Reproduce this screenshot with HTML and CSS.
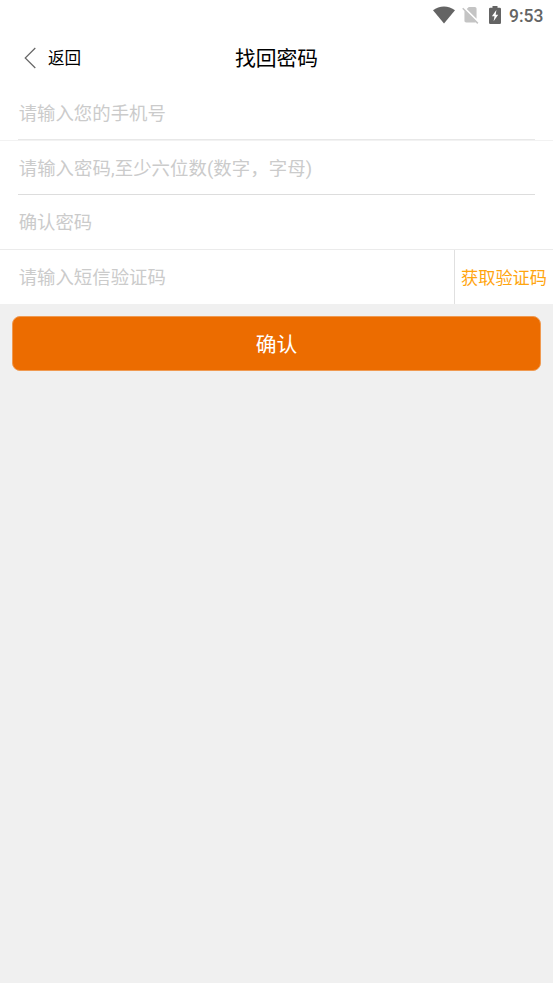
FILE: index.html
```html
<!DOCTYPE html>
<html lang="zh-CN">
<head>
<meta charset="utf-8">
<title>找回密码</title>
<link rel="stylesheet" href="styles.css">
</head>
<body>
<div class="status">
  <svg class="wifi" width="22" height="18" viewBox="0 0 22 18"><path d="M0 4.3C6.2-.9 15.8-.9 22 4.3L11 17.4Z"/></svg>
  <svg class="sim" width="17" height="18" viewBox="2.2 1.9 19.6 20.8"><path d="M19 5c0-1.1-.9-2-2-2h-7L7.66 5.34 19 16.68ZM3.65 3.88 2.38 5.15 5 7.77V19c0 1.1.9 2 2 2h10c.35 0 .67-.1.96-.26l1.88 1.88 1.27-1.27Z"/></svg>
  <svg class="battery" width="12" height="18" viewBox="0 0 12 18"><path fill-rule="evenodd" d="M3.5 0H8.5V1.8H10.7Q12 1.8 12 3.1V16.7Q12 18 10.7 18H1.3Q0 18 0 16.7V3.1Q0 1.8 1.3 1.8H3.5ZM7.4 4 2.9 10.2H5.5L4.6 15.2 9.2 8.8H6.7Z"/></svg>
  <span class="time">9:53</span>
</div>
<header class="nav">
  <a class="back"><svg width="12" height="22" viewBox="0 0 12 22"><path d="M11.3 1 1.2 11 11.3 21"/></svg><span>返回</span></a>
  <h1>找回密码</h1>
</header>
<main>
  <div class="form">
    <div class="row phone"><div class="field">请输入您的手机号</div></div>
    <div class="row password"><div class="field">请输入密码,至少六位数(数字，字母)</div></div>
    <div class="row confirm"><div class="field plain">确认密码</div></div>
    <div class="row code"><div class="field plain">请输入短信验证码</div><a class="get-code">获取验证码</a></div>
  </div>
  <div class="submit">确认</div>
</main>
</body>
</html>
```
FILE: styles.css
```css
* { box-sizing: border-box; }
body {
  margin: 0;
  min-height: 983px;
  background: #f0f0f0;
  font-family: Roboto, "Noto Sans CJK SC", sans-serif;
}
svg { display: block; flex: none; }
.status {
  display: flex;
  height: 31px;
  padding: 6px 10px 0 433px;
  background: #fff;
  color: #646464;
}
.wifi, .battery { fill: #646464; }
.sim { margin-left: 7px; fill: #c4c4c4; }
.battery { margin-left: 10px; }
.time {
  margin-left: 8px;
  font-size: 17.5px;
  font-weight: 500;
  line-height: 20px;
  white-space: nowrap;
}
.nav {
  display: grid;
  grid-template-columns: 1fr auto 1fr;
  align-items: center;
  height: 54px;
  background: #fff;
  color: #000;
}
.back {
  display: flex;
  align-items: center;
  gap: 12px;
  padding-left: 24px;
  font-size: 16.6px;
}
.back span { padding-bottom: 2px; }
.back path { fill: none; stroke: #666; stroke-width: 1.2; }
h1 { margin: 0; padding-top: 2px; font-size: 20.8px; font-weight: 400; line-height: 52px; }
.form { background: #fff; color: #cbcbcb; font-size: 18.4px; }
.row { display: flex; height: 55px; }
.field {
  flex: 1;
  margin: 0 18px;
  padding-left: 0.7px;
  border-bottom: 1px solid #ddd;
  line-height: 56px;
}
.plain { border-bottom: 0; }
.phone { height: 56px; border-bottom: 1px solid #f2f2f2; }
.phone .field { border-color: #e8e8e8; line-height: 58px; }
.password { height: 54px; }
.password .field { letter-spacing: 0.07px; }
.confirm { border-bottom: 1px solid #ebebeb; }
.code { height: 54px; }
.get-code {
  width: 99px;
  padding-left: 6px;
  border-left: 1px solid #e0e0e0;
  color: #ffa50f;
  font-size: 17.2px;
  line-height: 56px;
  white-space: nowrap;
}
.submit {
  height: 55px;
  margin: 12px 12px 0;
  border: 1px solid #f09a51;
  border-radius: 8px;
  background: #ec6c00;
  color: #fff;
  font-size: 20.8px;
  line-height: 56px;
  text-align: center;
}
```
